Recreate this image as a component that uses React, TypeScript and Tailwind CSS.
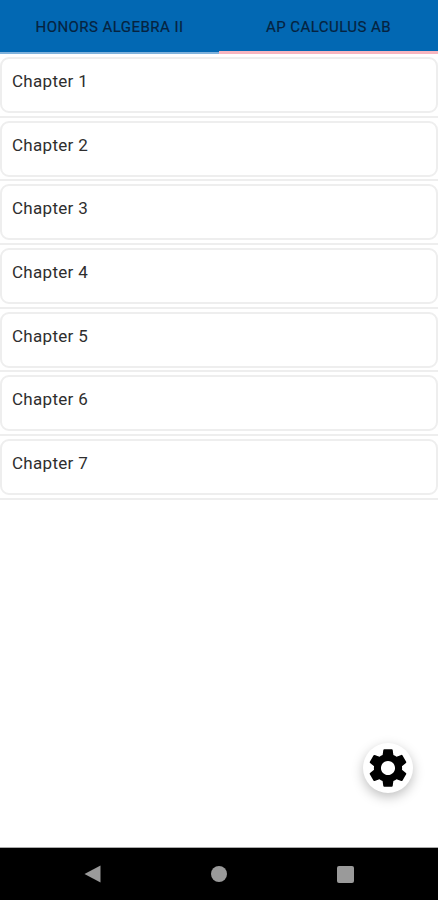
import React from "react";

const chapters = ["Chapter 1", "Chapter 2", "Chapter 3", "Chapter 4", "Chapter 5", "Chapter 6", "Chapter 7"];

export default function App() {
  return (
    <div className="relative flex h-[900px] w-full flex-col overflow-hidden bg-white font-['Roboto',sans-serif]">
      <header className="flex h-[54px] shrink-0 bg-[#0268b3] text-[15px] text-[#06233f]">
        <div className="flex flex-1 items-center justify-center border-b-[2px] border-[#7fb2dc] pt-[3px] tracking-[0.45px] [-webkit-text-stroke:0.2px_#06233f]">HONORS ALGEBRA II</div>
        <div className="flex flex-1 items-center justify-center border-b-[3px] border-[#f7b6c0] pt-[4px] tracking-[0.45px] [-webkit-text-stroke:0.2px_#06233f]">AP CALCULUS AB</div>
      </header>
      <main className="flex-1">
        {chapters.map((c) => (
          <div key={c} className="h-[63.7px] border-b-2 border-[#eeeeee] pt-[3px]">
            <div className="h-[56px] rounded-[9px] border-2 border-[#eeeeee] bg-white pl-[10px] pt-[11px] text-[17px] leading-[22px] tracking-[0.3px] text-[#2e2e2e]">
              {c}
            </div>
          </div>
        ))}
      </main>
      <button className="absolute left-[363px] top-[743px] flex h-[50px] w-[50px] items-center justify-center rounded-full bg-white shadow-[0_4px_12px_rgba(0,0,0,0.25)]">
        <svg width="47" height="47" viewBox="0 0 24 24" fill="black" className="-translate-x-[0.5px] -translate-y-[0.5px]">
          <path d="M19.14 12.94c.04-.3.06-.61.06-.94 0-.32-.02-.64-.07-.94l2.03-1.58a.49.49 0 0 0 .12-.61l-1.92-3.32a.488.488 0 0 0-.59-.22l-2.39.96c-.5-.38-1.03-.7-1.62-.94l-.36-2.54a.484.484 0 0 0-.48-.41h-3.84c-.24 0-.43.17-.47.41l-.36 2.54c-.59.24-1.13.57-1.62.94l-2.39-.96c-.22-.08-.47 0-.59.22L2.74 8.87c-.12.21-.08.47.12.61l2.03 1.58c-.05.3-.09.63-.09.94s.02.64.07.94l-2.03 1.58a.49.49 0 0 0-.12.61l1.92 3.32c.12.22.37.29.59.22l2.39-.96c.5.38 1.03.7 1.62.94l.36 2.54c.05.24.24.41.48.41h3.84c.24 0 .44-.17.47-.41l.36-2.54c.59-.24 1.13-.56 1.62-.94l2.39.96c.22.08.47 0 .59-.22l1.92-3.32c.12-.22.07-.47-.12-.61l-2.01-1.58zM12 15.6c-1.98 0-3.6-1.62-3.6-3.6s1.62-3.6 3.6-3.6 3.6 1.62 3.6 3.6-1.62 3.6-3.6 3.6z" />
        </svg>
      </button>
      <nav className="flex h-[53px] shrink-0 items-center justify-between border-t border-[#aaaaaa] bg-black pl-[84px] pr-[84px]">
        <svg width="17" height="18" viewBox="0 0 17 18"><path d="M16.5 0.5V17.5L0.5 9Z" fill="#9a9a9a" /></svg>
        <div className="h-[16px] w-[16px] rounded-full bg-[#9a9a9a]" />
        <div className="h-[17px] w-[17px] rounded-[2px] bg-[#9a9a9a]" />
      </nav>
    </div>
  );
}
